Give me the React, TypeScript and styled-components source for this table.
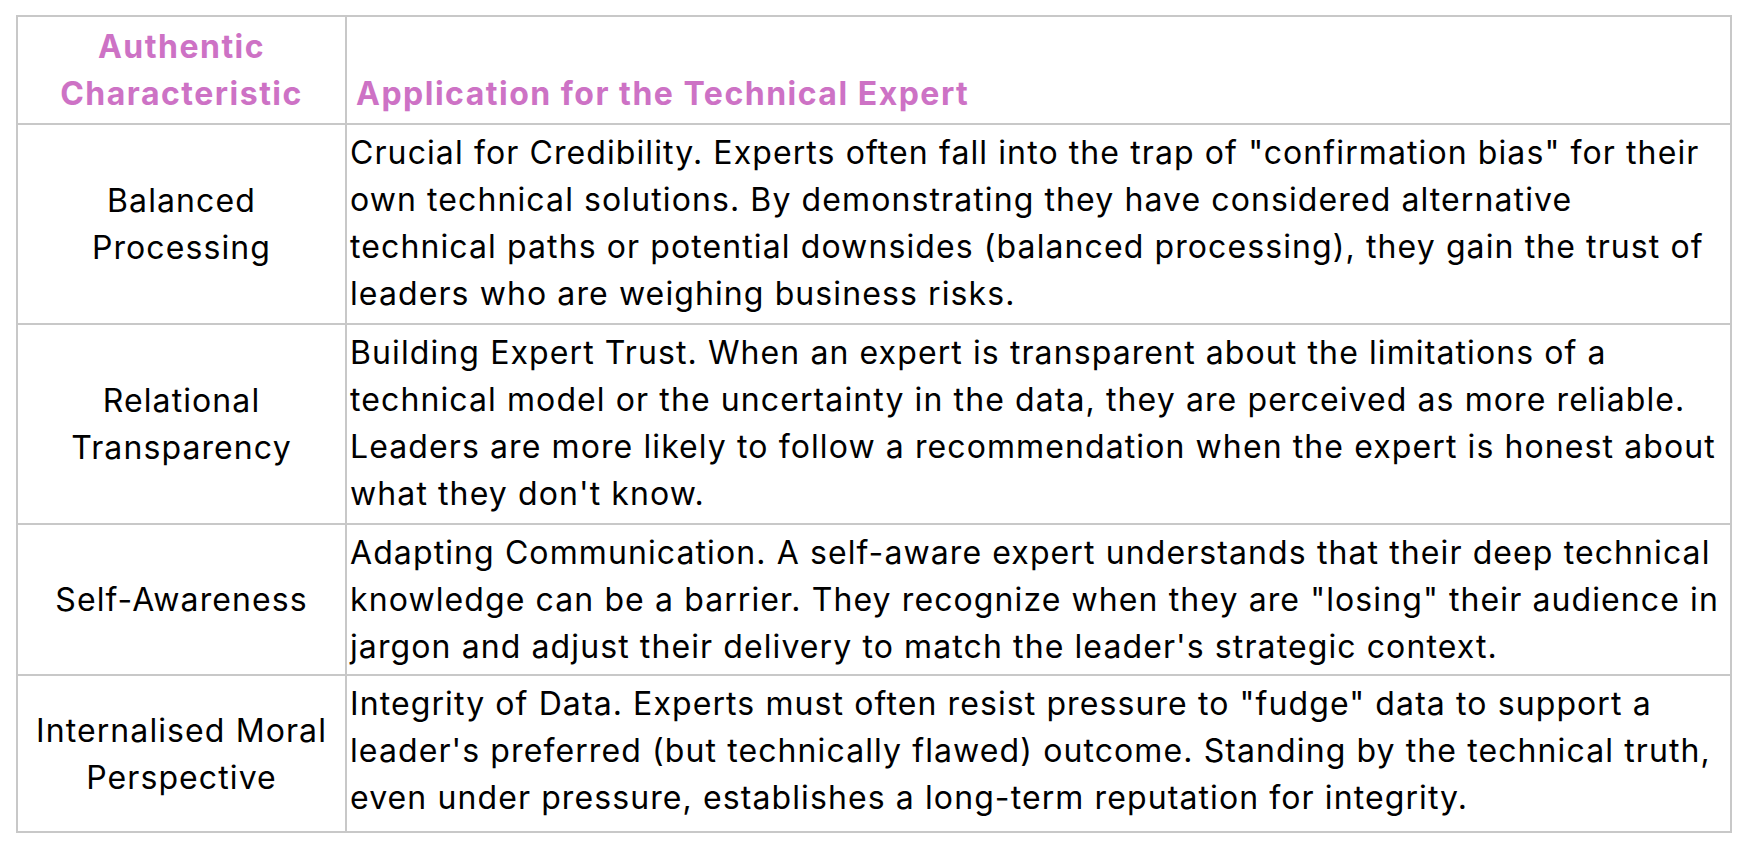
import React from 'react';
import styled, { createGlobalStyle } from 'styled-components';

const GlobalStyle = createGlobalStyle`
  html, body {
    margin: 0;
    padding: 0;
    background: #ffffff;
  }
  body {
    font-family: Inter, 'Open Sans', 'Liberation Sans', sans-serif;
    color: #000000;
  }
`;

const Page = styled.main`
  padding: 15px 0 0 16px;
`;

const Table = styled.table`
  border-collapse: collapse;
  width: 1716px;
  table-layout: fixed;
  font-size: 32px;
  line-height: 47px;
  letter-spacing: 1.1px;
`;

const Row = styled.tr<{ h: number }>`
  height: ${props => props.h}px;
`;

const HeadCell = styled.th<{ center?: boolean }>`
  border: 2px solid #c8c8c8;
  padding: 6px ${props => props.center ? '4px' : '9px'} 6px;
  vertical-align: bottom;
  text-align: ${props => props.center ? 'center' : 'left'};
  font-weight: 700;
  letter-spacing: 1.5px;
  color: #cd72c5;
`;

const NameCell = styled.td`
  border: 2px solid #c8c8c8;
  padding: 4px;
  text-align: center;
  vertical-align: middle;
`;

const TextCell = styled.td`
  border: 2px solid #c8c8c8;
  padding: 4px 3px 4px;
  text-align: left;
  vertical-align: top;
`;

const Line = styled.span`
  display: block;
  white-space: nowrap;
`;

type Entry = { name: string[]; lines: string[]; h: number };

const rows: Entry[] = [
  {
    name: ['Balanced', 'Processing'],
    lines: [
      'Crucial for Credibility. Experts often fall into the trap of "confirmation bias" for their',
      'own technical solutions. By demonstrating they have considered alternative',
      'technical paths or potential downsides (balanced processing), they gain the trust of',
      'leaders who are weighing business risks.',
    ],
    h: 200,
  },
  {
    name: ['Relational', 'Transparency'],
    lines: [
      'Building Expert Trust. When an expert is transparent about the limitations of a',
      'technical model or the uncertainty in the data, they are perceived as more reliable.',
      'Leaders are more likely to follow a recommendation when the expert is honest about',
      "what they don't know.",
    ],
    h: 200,
  },
  {
    name: ['Self-Awareness'],
    lines: [
      'Adapting Communication. A self-aware expert understands that their deep technical',
      'knowledge can be a barrier. They recognize when they are "losing" their audience in',
      "jargon and adjust their delivery to match the leader's strategic context.",
    ],
    h: 150,
  },
  {
    name: ['Internalised Moral', 'Perspective'],
    lines: [
      'Integrity of Data. Experts must often resist pressure to "fudge" data to support a',
      "leader's preferred (but technically flawed) outcome. Standing by the technical truth,",
      'even under pressure, establishes a long-term reputation for integrity.',
    ],
    h: 157,
  },
];

const App: React.FC = () => {
  return (
    <Page>
      <GlobalStyle />
      <Table>
        <colgroup>
          <col style={{ width: 329 }} />
          <col />
        </colgroup>
        <thead>
          <Row h={106}>
            <HeadCell center>
              <Line>Authentic</Line>
              <Line>Characteristic</Line>
            </HeadCell>
            <HeadCell>Application for the Technical Expert</HeadCell>
          </Row>
        </thead>
        <tbody>
          {rows.map((row, i) => (
            <Row key={i} h={row.h}>
              <NameCell>
                {row.name.map((n, j) => (
                  <Line key={j}>{n}</Line>
                ))}
              </NameCell>
              <TextCell>
                {row.lines.map((l, j) => (
                  <Line key={j}>{l}</Line>
                ))}
              </TextCell>
            </Row>
          ))}
        </tbody>
      </Table>
    </Page>
  );
};

export default App;
